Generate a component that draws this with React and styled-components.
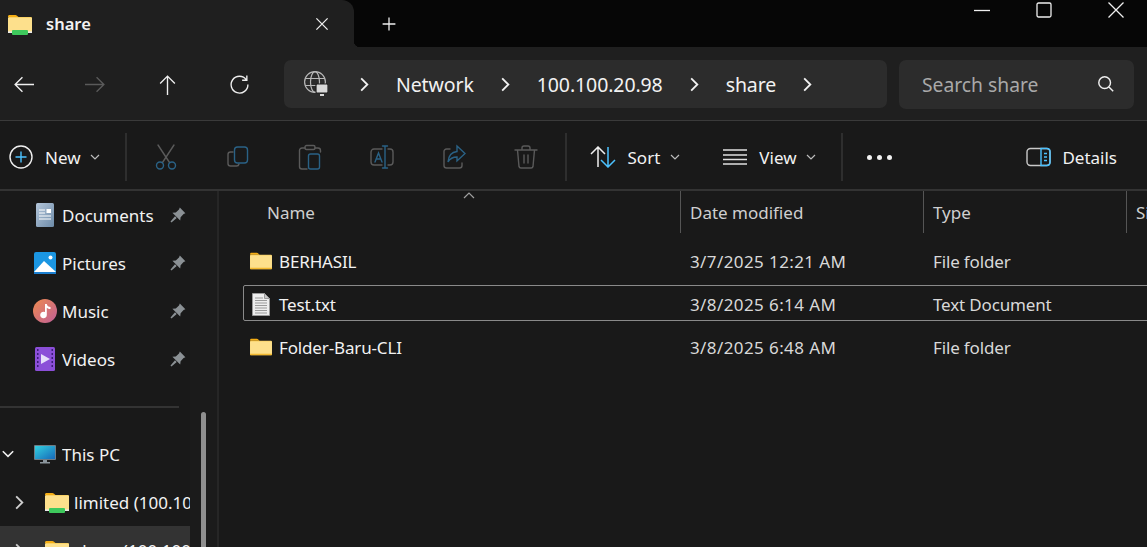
import styled, { createGlobalStyle } from "styled-components";

const Global = createGlobalStyle`
  html, body {
    margin: 0;
    height: 100%;
    overflow: hidden;
    background: #191919;
  }
  * {
    box-sizing: border-box;
  }
`;

const Window = styled.div`
  width: 1147px;
  height: 547px;
  display: flex;
  flex-direction: column;
  overflow: hidden;
  font-family: "Noto Sans", "Open Sans", sans-serif;
  font-size: 17px;
  color: #f2f2f2;
  background: #191919;
`;

/* Barra de titulo com a aba */
const TitleBar = styled.div`
  height: 47px;
  flex: none;
  display: flex;
  background: #060606;
`;

const Tab = styled.div`
  position: relative;
  width: 354px;
  display: flex;
  align-items: center;
  padding: 0 24px 0 8px;
  gap: 14px;
  background: #1f1f1f;
  border-top-right-radius: 12px;
  font-size: 16.5px;
  font-weight: 600;

  &::after {
    content: "";
    position: absolute;
    left: 100%;
    bottom: 0;
    width: 6px;
    height: 6px;
    background: radial-gradient(circle at 100% 0, transparent 6px, #1f1f1f 6.5px);
  }
`;

const TabTitle = styled.span`
  flex: 1;
`;

const NewTab = styled.div`
  display: flex;
  align-items: center;
  margin-left: 27px;
`;

const WindowButtons = styled.div`
  margin-left: auto;
  display: flex;
  align-items: flex-start;
  gap: 46px;
  padding: 2px 23px 0 0;

  svg + svg + svg {
    margin-left: 10px;
  }
`;

/* Linha de navegacao */
const NavRow = styled.div`
  height: 74px;
  flex: none;
  display: flex;
  align-items: center;
  padding: 1px 13px 0 0;
  background: #1f1f1f;
  border-bottom: 1px solid #3a3a3a;
`;

const NavButtons = styled.div`
  width: 284px;
  flex: none;
  display: flex;
  align-items: center;
  gap: 51px;
  padding-left: 13px;
`;

const AddressBar = styled.div`
  width: 603px;
  height: 48px;
  flex: none;
  display: flex;
  align-items: center;
  gap: 22px;
  padding-left: 20px;
  background: #2c2c2c;
  border-radius: 7px;
  font-size: 19.5px;
  letter-spacing: -0.1px;
`;

const GlobeSvg = styled.svg`
  margin-right: 5px;
`;

const SearchBox = styled.div`
  width: 235px;
  height: 49px;
  flex: none;
  margin-left: 12px;
  display: flex;
  align-items: center;
  justify-content: space-between;
  padding: 0 19px 0 23px;
  background: #2c2c2c;
  border-radius: 7px;
  font-size: 19.3px;
  color: #a9a9a9;
`;

/* Barra de comandos */
const Toolbar = styled.div`
  height: 70px;
  flex: none;
  display: flex;
  align-items: center;
  padding: 4px 30px 0 9px;
  background: #191919;
  border-bottom: 2px solid #333;
`;

const Command = styled.div`
  display: flex;
  align-items: center;
  gap: ${(p) => p.$gap || 11}px;
  margin-left: ${(p) => p.$left || 0}px;
`;

const DetailsCommand = styled(Command)`
  margin-left: auto;
`;

const IconGroup = styled.div`
  display: flex;
  align-items: center;
  gap: 48px;
  padding: 0 27px;
`;

const Separator = styled.div`
  width: 2px;
  height: 48px;
  background: #2e2e2e;
`;

const CaretIcon = styled.svg`
  margin-left: -2px;
`;

const Dots = styled.div`
  display: flex;
  gap: 5px;
  margin-left: 24px;

  i {
    width: 5px;
    height: 5px;
    border-radius: 50%;
    background: #f2f2f2;
  }
`;

const Body = styled.div`
  flex: 1;
  min-height: 0;
  display: flex;
`;

/* Painel lateral */
const Sidebar = styled.div`
  width: 190px;
  flex: none;
  overflow: hidden;
`;

const NavItem = styled.div`
  height: 48px;
  display: flex;
  align-items: center;
  white-space: nowrap;
  overflow: hidden;
  background: ${(p) => (p.$active ? "#333" : "transparent")};
`;

const TreeSlot = styled.div`
  width: ${(p) => p.$width}px;
  flex: none;
  display: flex;
  padding-left: ${(p) => Math.max(p.$width - 35, 0)}px;
`;

const NavIcon = styled.div`
  width: 24px;
  flex: none;
  display: flex;
  justify-content: center;
  margin-right: 5px;
`;

const NavLabel = styled.span`
  flex: 1;
  overflow: hidden;
`;

const Pin = styled.div`
  display: flex;
  margin-right: 4px;
`;

const NavDivider = styled.div`
  width: 179px;
  height: 2px;
  margin: 23px 0 22px;
  background: #333;
`;

const ScrollTrack = styled.div`
  width: 29px;
  flex: none;
  padding: 221px 0 0 11px;
  background: #1b1b1b;
  border-right: 2px solid #262626;
`;

const ScrollThumb = styled.div`
  width: 5px;
  height: 200px;
  border-radius: 3px;
  background: #8f8f8f;
`;

/* Lista de arquivos */
const Content = styled.div`
  flex: 1;
  min-width: 0;
  overflow: hidden;
`;

const HeaderRow = styled.div`
  position: relative;
  height: 42px;
  display: grid;
  grid-template-columns: 461px 243px 203px 1fr;
  color: #cfcfcf;
`;

const HeaderCell = styled.div`
  display: flex;
  align-items: center;
  padding-left: ${(p) => (p.$first ? 48 : 9)}px;
  border-left: ${(p) => (p.$first ? "none" : "1px solid #555")};
  overflow: hidden;
`;

const SortCaret = styled.svg`
  position: absolute;
  left: 244px;
  top: 1px;
`;

const FileList = styled.div`
  display: flex;
  flex-direction: column;
  gap: 7px;
  padding: 9px 0 0 24px;
`;

const FileRow = styled.div`
  height: 36px;
  margin-right: -2px;
  padding-top: 2px;
  display: grid;
  grid-template-columns: 437px 243px 1fr;
  align-items: center;
  border: 1px solid ${(p) => (p.$selected ? "#8a8a8a" : "transparent")};
  border-radius: 2px;
  color: #d8d8d8;
`;

const NameCell = styled.div`
  display: flex;
  align-items: center;
  gap: 7px;
  padding-left: 6px;
  color: #f2f2f2;
  letter-spacing: -0.15px;
`;

const FileGlyph = styled.div`
  width: 22px;
  flex: none;
  display: flex;
  justify-content: center;
`;

const DateCell = styled.div`
  padding-left: 9px;
  letter-spacing: 0.4px;
`;

const TypeCell = styled.div`
  padding-left: 9px;
  letter-spacing: -0.15px;
`;

function Line({ d, size = 20, color = "#efefef", width = 1.4 }) {
  return (
    <svg width={size} height={size} viewBox="0 0 20 20" fill="none" stroke={color} strokeWidth={width}>
      <path d={d} />
    </svg>
  );
}

function Chevron({ color = "#f2f2f2", size = 19 }) {
  return <Line d="M6.500 3.500 13 10l-6.500 6.500" size={size} color={color} width={1.900} />;
}

function Caret() {
  return (
    <CaretIcon width="10" height="6" viewBox="0 0 10 6" fill="none" stroke="#bdbdbd" strokeWidth="1.200">
      <path d="M1 1l4 4 4-4" />
    </CaretIcon>
  );
}

function Folder({ green = false, w = 24, h = 22 }) {
  return (
    <svg width={w} height={h} viewBox="0 0 24 22">
      <path d="M0 3.500C0 2.500.7 2 1.500 2h6c.6 0 1 .3 1.500.8L10.500 4H0z" fill="#f5ae15" />
      <rect x="0" y="4" width="24" height="16" rx="1" fill="#f9d266" />
      <rect x="0" y="5" width="24" height="14" fill="#fde08c" />
      <rect x="0" y="18.400" width="24" height="1.600" fill={green ? "#e9e9e9" : "#f3b92f"} />
      {green && <rect x="4" y="17" width="16" height="5" rx="1" fill="#3ec95c" />}
    </svg>
  );
}

function TextFile() {
  return (
    <svg width="18" height="23" viewBox="0 0 18 23">
      <path d="M.5.500h12l5 5v17H.5z" fill="#eeeeee" stroke="#9a9a9a" />
      <path d="M12.500.500v5h5z" fill="#c9c9c9" stroke="#9a9a9a" />
      <path
        d="M3 5h8M3 7.500h12M3 10h12M3 12.500h12M3 15h12M3 17.500h12M3 20h12"
        stroke="#9a9a9a"
        strokeWidth="1"
      />
    </svg>
  );
}

function PinIcon() {
  return (
    <svg width="16" height="16" viewBox="0 0 16 16" fill="#8b9195">
      <path d="M9.800.600 15.400 6.200 13.600 7l-3 3.200-.4 3.400L2.400 5.800 5.800 5.400 9 2.400z" />
      <path d="M5 9.300 6.700 11 1.500 15.500.5 14.500z" />
    </svg>
  );
}

function DocumentsIcon() {
  return (
    <svg width="18" height="24" viewBox="0 0 18 24">
      <defs>
        <linearGradient id="doc" x1="0" y1="0" x2="1" y2="1">
          <stop offset="0" stopColor="#b4c6da" />
          <stop offset="1" stopColor="#6d8ba8" />
        </linearGradient>
      </defs>
      <rect width="18" height="24" rx="1.500" fill="url(#doc)" />
      <path d="M3 7h6M3 10h6M3 13h12M3 16h12" stroke="#fff" strokeWidth="1" />
      <rect x="10.500" y="6" width="4.500" height="4" fill="#fff" />
    </svg>
  );
}

function PicturesIcon() {
  return (
    <svg width="22" height="22" viewBox="0 0 22 22">
      <rect width="22" height="22" rx="2" fill="#1b96e2" />
      <circle cx="16.500" cy="5.500" r="2" fill="#fff" />
      <path d="M0 20 10 9l12 11v2H0z" fill="#fff" />
      <rect y="20" width="22" height="2" fill="#1b7fd0" />
    </svg>
  );
}

function MusicIcon() {
  return (
    <svg width="24" height="24" viewBox="0 0 24 24">
      <defs>
        <linearGradient id="mus" x1="0" y1="0" x2="1" y2="1">
          <stop offset="0" stopColor="#ee8a4e" />
          <stop offset="1" stopColor="#c05f98" />
        </linearGradient>
      </defs>
      <circle cx="12" cy="12" r="12" fill="url(#mus)" />
      <path d="M12 5h1.800c.3 2 1.700 2.800 3.700 3v2c-1.500 0-2.800-.5-3.700-1.300V16a3.300 3.300 0 1 1-1.800-2.900z" fill="#fff" />
    </svg>
  );
}

function VideosIcon() {
  return (
    <svg width="20" height="24" viewBox="0 0 20 24">
      <rect width="20" height="24" rx="1.500" fill="#8b4fd8" />
      <path d="M2 2h1.500v2H2zM2 6h1.500v2H2zM2 10h1.500v2H2zM2 14h1.500v2H2zM2 18h1.500v2H2zM16.500 2H18v2h-1.500zM16.500 6H18v2h-1.500zM16.500 10H18v2h-1.500zM16.500 14H18v2h-1.500zM16.500 18H18v2h-1.500z" fill="#3b1b78" />
      <path d="M6 7l9 5-9 5z" fill="#e6defa" />
    </svg>
  );
}

function MonitorIcon() {
  return (
    <svg width="22" height="19" viewBox="0 0 22 19">
      <defs>
        <linearGradient id="pc" x1="0" y1="0" x2="1" y2="1">
          <stop offset="0" stopColor="#33d0e0" />
          <stop offset="1" stopColor="#1668b8" />
        </linearGradient>
      </defs>
      <rect width="22" height="15" rx="1" fill="#6f7b84" />
      <rect x="1" y="1" width="20" height="13" fill="url(#pc)" />
      <path d="M9 15h4v2h3v1.500H6V17h3z" fill="#8b959c" />
    </svg>
  );
}

function GlobeIcon() {
  return (
    <GlobeSvg width="24" height="26" viewBox="0 0 24 26" fill="none" stroke="#b8b8b8" strokeWidth="1.200">
      <circle cx="11" cy="11" r="10.400" />
      <ellipse cx="11" cy="11" rx="4.500" ry="10.400" />
      <path d="M1 7.500h20M1 14.500h20" />
      <rect x="12" y="13" width="12" height="9" rx="1" fill="#d8d8d8" stroke="#1f1f1f" />
      <path d="M16 23h4v2h-4z" fill="#d8d8d8" stroke="none" />
    </GlobeSvg>
  );
}

const dim = "#5a5a5a";
const dimBlue = "#2a6286";

function ToolIcon({ children }) {
  return (
    <svg width="24" height="26" viewBox="0 0 24 26" fill="none" strokeWidth="1.400" strokeLinecap="round">
      {children}
    </svg>
  );
}

const tools = [
  <>
    <path d="M4 1l11.500 17.500M20 1L8.500 18.500" stroke={dim} />
    <circle cx="6" cy="21.500" r="3.500" stroke={dimBlue} />
    <circle cx="18" cy="21.500" r="3.500" stroke={dimBlue} />
  </>,
  <>
    <path d="M7 8H4.500A2.500 2.500 0 0 0 2 10.500v9A2.500 2.500 0 0 0 4.500 22h6a2.500 2.500 0 0 0 2.500-2" stroke={dim} />
    <rect x="8.500" y="3" width="13" height="16" rx="3" stroke={dimBlue} />
  </>,
  <>
    <path d="M7 4H4a2.500 2.500 0 0 0-2.500 2.500v16A2.500 2.500 0 0 0 4 25h5M17 4h3a2.500 2.500 0 0 1 2.500 2.500V8" stroke={dim} />
    <rect x="7" y="1.500" width="10" height="4" rx="1.500" stroke={dim} />
    <rect x="10.500" y="10" width="11" height="15" rx="2" stroke={dimBlue} />
  </>,
  <>
    <path d="M12 5H4a3 3 0 0 0-3 3v10a3 3 0 0 0 3 3h8M18 5h2a3 3 0 0 1 3 3v10a3 3 0 0 1-3 3h-2" stroke={dim} />
    <path d="M15 2v22M12.500 2h5M12.500 24h5M5 18l3.500-9 3.500 9M6.200 15h4.600" stroke={dimBlue} />
  </>,
  <>
    <path d="M8 5H4.500A2.500 2.500 0 0 0 2 7.500v14A2.500 2.500 0 0 0 4.500 24h13a2.500 2.500 0 0 0 2.500-2.500V19" stroke={dim} />
    <path d="M15 2l8 7.500-8 7.500v-4c-4 0-7 1.500-9 5 .5-6 4-10 9-10.500z" stroke={dimBlue} />
  </>,
  <>
    <path d="M1 6h22M8 6V4a2 2 0 0 1 2-2h4a2 2 0 0 1 2 2v2M3.500 6l1.500 16.500A2 2 0 0 0 7 24h10a2 2 0 0 0 2-1.500L20.500 6M10 11v8M14 11v8" stroke={dim} />
  </>,
];

const pinned = [
  { label: "Documents", icon: <DocumentsIcon /> },
  { label: "Pictures", icon: <PicturesIcon /> },
  { label: "Music", icon: <MusicIcon /> },
  { label: "Videos", icon: <VideosIcon /> },
];

const files = [
  { name: "BERHASIL", date: "3/7/2025 12:21 AM", type: "File folder" },
  { name: "Test.txt", date: "3/8/2025 6:14 AM", type: "Text Document", selected: true, text: true },
  { name: "Folder-Baru-CLI", date: "3/8/2025 6:48 AM", type: "File folder" },
];

export default function App() {
  return (
    <Window>
      <Global />
      <TitleBar>
        <Tab>
          <Folder green />
          <TabTitle>share</TabTitle>
          <Line d="M3 3l14 14M17 3 3 17" size={16} width={1.600} />
        </Tab>
        <NewTab>
          <Line d="M10 2v16M2 10h16" size={16} width={1.600} />
        </NewTab>
        <WindowButtons>
          <svg width="16" height="16" viewBox="0 0 16 16" stroke="#efefef" strokeWidth="1.300">
            <path d="M0 8.500h16" />
          </svg>
          <svg width="16" height="16" viewBox="0 0 16 16" fill="none" stroke="#efefef" strokeWidth="1.300">
            <rect x="1" y="1" width="14" height="14" rx="1.500" />
          </svg>
          <svg width="16" height="16" viewBox="0 0 16 16" stroke="#efefef" strokeWidth="1.300">
            <path d="M.5.500l15 15M15.500.500l-15 15" />
          </svg>
        </WindowButtons>
      </TitleBar>

      <NavRow>
        <NavButtons>
          <Line d="M20 10H2M9 3l-7 7 7 7" size={21} width={1.300} />
          <Line d="M0 10h18M11 3l7 7-7 7" size={21} color="#5a5a5a" width={1.300} />
          <Line d="M10 20V2M3 9l7-7 7 7" size={21} width={1.300} />
          <Line d="M16.500 5.500A8 8 0 1 0 18 10M17 1.500v4.500h-4.500" size={21} width={1.300} />
        </NavButtons>
        <AddressBar>
          <GlobeIcon />
          <Chevron />
          <span>Network</span>
          <Chevron />
          <span>100.100.20.98</span>
          <Chevron />
          <span>share</span>
          <Chevron />
        </AddressBar>
        <SearchBox>
          Search share
          <Line d="M8.500 2a6.500 6.500 0 1 0 0 13 6.500 6.500 0 0 0 0-13zM13 13l5 5" size={18} width={1.600} />
        </SearchBox>
      </NavRow>

      <Toolbar>
        <Command>
          <svg width="25" height="24" viewBox="0 0 25 24" fill="none" strokeWidth="1.400">
            <circle cx="12" cy="12" r="11" stroke="#efefef" />
            <path d="M12 6.500v11M6.500 12h11" stroke="#4cc2ff" />
          </svg>
          New
          <Caret />
        </Command>
        <Command $left={25}>
          <Separator />
        </Command>
        <IconGroup>
          {tools.map((tool, i) => (
            <ToolIcon key={i}>{tool}</ToolIcon>
          ))}
        </IconGroup>
        <Separator />
        <Command $left={23} $gap={12}>
          <svg width="26" height="22" viewBox="0 0 26 22" fill="none" strokeWidth="1.500">
            <path d="M8 21V1M1 8l7-7 7 7" stroke="#efefef" />
            <path d="M18 1v20M11 14l7 7 7-7" stroke="#4cc2ff" />
          </svg>
          Sort
          <Caret />
        </Command>
        <Command $left={42}>
          <svg width="26" height="18" viewBox="0 0 26 18" stroke="#e0e0e0" strokeWidth="1.300">
            <path d="M1 2h24M1 7h24M1 11.500h24M1 16h24" />
          </svg>
          View
          <Caret />
        </Command>
        <Command $left={25}>
          <Separator />
        </Command>
        <Dots>
          <i />
          <i />
          <i />
        </Dots>
        <DetailsCommand>
          <svg width="25" height="20" viewBox="0 0 25 20" fill="none" strokeWidth="1.400">
            <rect x="1" y="1.500" width="23" height="17" rx="3.500" stroke="#c9c9c9" />
            <path d="M15 1.500h6a3 3 0 0 1 3 3v11a3 3 0 0 1-3 3h-6z" stroke="#4cc2ff" />
            <path d="M18 6.500h3M18 10h3M18 13.500h3" stroke="#4cc2ff" />
          </svg>
          Details
        </DetailsCommand>
      </Toolbar>

      <Body>
        <Sidebar>
          {pinned.map((item) => (
            <NavItem key={item.label}>
              <TreeSlot $width={33} />
              <NavIcon>{item.icon}</NavIcon>
              <NavLabel>{item.label}</NavLabel>
              <Pin>
                <PinIcon />
              </Pin>
            </NavItem>
          ))}
          <NavDivider />
          <NavItem>
            <TreeSlot $width={33}>
              <Line d="M3.500 6.500 10 13l6.500-6.500" size={16} width={2} />
            </TreeSlot>
            <NavIcon>
              <MonitorIcon />
            </NavIcon>
            <NavLabel>This PC</NavLabel>
          </NavItem>
          <NavItem>
            <TreeSlot $width={45}>
              <Chevron color="#cfcfcf" />
            </TreeSlot>
            <NavIcon>
              <Folder green />
            </NavIcon>
            <NavLabel>limited (100.100.20.98)</NavLabel>
          </NavItem>
          <NavItem $active>
            <TreeSlot $width={45}>
              <Chevron color="#cfcfcf" />
            </TreeSlot>
            <NavIcon>
              <Folder green />
            </NavIcon>
            <NavLabel>share (100.100.20.98)</NavLabel>
          </NavItem>
        </Sidebar>
        <ScrollTrack>
          <ScrollThumb />
        </ScrollTrack>
        <Content>
          <HeaderRow>
            <SortCaret width="12" height="7" viewBox="0 0 12 7" fill="none" stroke="#a0a0a0" strokeWidth="1.200">
              <path d="M1 6l5-5 5 5" />
            </SortCaret>
            <HeaderCell $first>Name</HeaderCell>
            <HeaderCell>Date modified</HeaderCell>
            <HeaderCell>Type</HeaderCell>
            <HeaderCell>Size</HeaderCell>
          </HeaderRow>
          <FileList>
            {files.map((file) => (
              <FileRow key={file.name} $selected={file.selected}>
                <NameCell>
                  <FileGlyph>{file.text ? <TextFile /> : <Folder w={22} h={20} />}</FileGlyph>
                  {file.name}
                </NameCell>
                <DateCell>{file.date}</DateCell>
                <TypeCell>{file.type}</TypeCell>
              </FileRow>
            ))}
          </FileList>
        </Content>
      </Body>
    </Window>
  );
}
